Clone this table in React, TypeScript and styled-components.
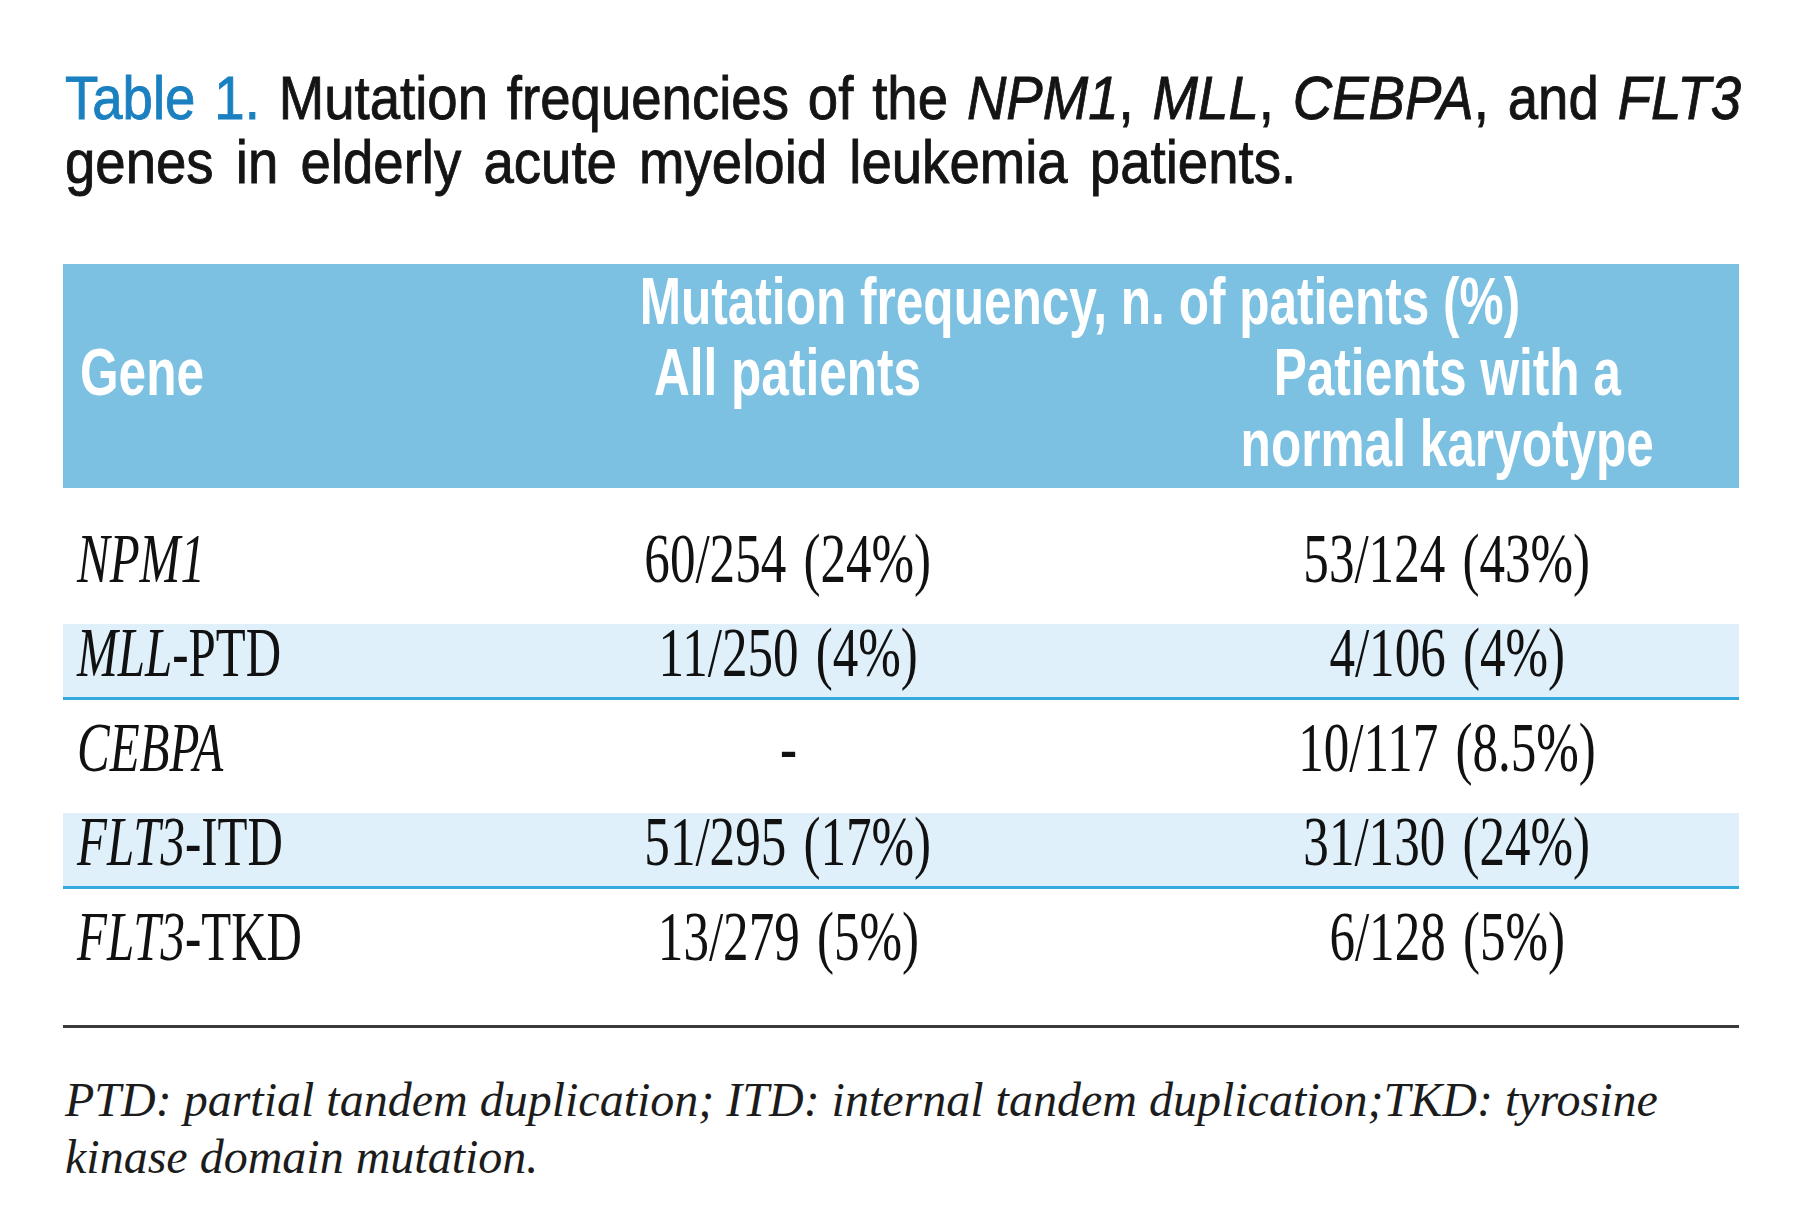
import styled, { createGlobalStyle } from "styled-components";

const GlobalStyle = createGlobalStyle`
  html, body {
    margin: 0;
    padding: 0;
    background: #ffffff;
  }
`;

const Page = styled.div`
  width: 1800px;
  height: 1221px;
  box-sizing: border-box;
  padding: 66px 61px 0 63px;
  overflow: hidden;
  background: #ffffff;
  color: #111111;
`;

const Caption = styled.div`
  font-family: "Liberation Sans", Arial, sans-serif;
  font-size: 62px;
  line-height: 64px;
  color: #141414;
  -webkit-text-stroke: 0.9px currentColor;
  margin-bottom: 70px;
`;

const CaptionLine = styled.div<{ $justify?: boolean; $wordGap?: number }>`
  width: calc(100% / 0.88);
  transform: scaleX(0.88);
  transform-origin: left center;
  white-space: nowrap;
  text-align: ${(p) => (p.$justify ? "justify" : "left")};
  text-align-last: ${(p) => (p.$justify ? "justify" : "left")};
  word-spacing: ${(p) => p.$wordGap || 0}px;
  margin-left: 2px;
`;

const Label = styled.span`
  color: #1a80c0;
`;

const Header = styled.div`
  display: grid;
  grid-template-columns: 358px 734px 1fr;
  background: #7cc1e1;
  padding: 1px 0 10px;
  font-family: "Liberation Sans", Arial, sans-serif;
  font-weight: 700;
  font-size: 67px;
  line-height: 71px;
  color: #ffffff;
`;

const HeadCell = styled.div<{ $align?: "left" | "center"; $span?: string }>`
  grid-column: ${(p) => p.$span || "auto"};
  text-align: ${(p) => p.$align || "center"};
  padding-left: ${(p) => (p.$align === "left" ? "17px" : "0")};
`;

const Squeeze = styled.span<{ $scale: number; $origin?: string }>`
  display: inline-block;
  transform: scaleX(${(p) => p.$scale});
  transform-origin: ${(p) => p.$origin || "center"} center;
  white-space: nowrap;
`;

const Body = styled.div`
  display: flex;
  flex-direction: column;
  gap: 18.5px;
  padding: 41.5px 0;
  border-bottom: 3px solid #3a3a3a;
`;

const Row = styled.div<{ $shaded?: boolean }>`
  display: grid;
  grid-template-columns: 358px 734px 1fr;
  height: 76px;
  box-sizing: border-box;
  padding-bottom: 18px;
  background: ${(p) => (p.$shaded ? "#dff0fa" : "transparent")};
  border-bottom: 3px solid ${(p) => (p.$shaded ? "#33a9de" : "transparent")};
  font-family: "Liberation Serif", "Times New Roman", serif;
  font-size: 69px;
  line-height: 58px;
  color: #111111;
`;

const GeneCell = styled.div`
  padding-left: 14px;
  white-space: nowrap;
`;

const ValueCell = styled.div`
  text-align: center;
  white-space: nowrap;
  word-spacing: 6px;
`;

const Footnote = styled.p`
  margin: 43px 0 0 2px;
  font-family: "Liberation Serif", "Times New Roman", serif;
  font-style: italic;
  font-size: 48px;
  line-height: 57px;
  color: #1c1c1c;
`;

type Gene = { name: string; suffix?: string; all: string; normal: string };

const rows: Gene[] = [
  { name: "NPM1", all: "60/254 (24%)", normal: "53/124 (43%)" },
  { name: "MLL", suffix: "-PTD", all: "11/250 (4%)", normal: "4/106 (4%)" },
  { name: "CEBPA", all: "-", normal: "10/117 (8.5%)" },
  { name: "FLT3", suffix: "-ITD", all: "51/295 (17%)", normal: "31/130 (24%)" },
  { name: "FLT3", suffix: "-TKD", all: "13/279 (5%)", normal: "6/128 (5%)" },
];

export default function App() {
  return (
    <>
      <GlobalStyle />
      <Page>
        <Caption>
          <CaptionLine $justify>
            <Label>Table 1.</Label> Mutation frequencies of the <i>NPM1</i>,{" "}
            <i>MLL</i>, <i>CEBPA</i>, and <i>FLT3</i>
          </CaptionLine>
          <CaptionLine $wordGap={8}>
            genes in elderly acute myeloid leukemia patients.
          </CaptionLine>
        </Caption>

        <Header>
          <HeadCell $span="2 / 4">
            <Squeeze $scale={0.74}>Mutation frequency, n. of patients (%)</Squeeze>
          </HeadCell>
          <HeadCell $align="left">
            <Squeeze $scale={0.74} $origin="left">
              Gene
            </Squeeze>
          </HeadCell>
          <HeadCell>
            <Squeeze $scale={0.74}>All patients</Squeeze>
          </HeadCell>
          <HeadCell>
            <Squeeze $scale={0.74}>
              Patients with a
              <br />
              normal karyotype
            </Squeeze>
          </HeadCell>
        </Header>

        <Body>
          {rows.map((r, i) => (
            <Row key={r.name + (r.suffix || "")} $shaded={i % 2 === 1}>
              <GeneCell>
                <Squeeze $scale={0.71} $origin="left">
                  <i>{r.name}</i>
                  {r.suffix}
                </Squeeze>
              </GeneCell>
              <ValueCell>
                <Squeeze $scale={0.74}>{r.all}</Squeeze>
              </ValueCell>
              <ValueCell>
                <Squeeze $scale={0.74}>{r.normal}</Squeeze>
              </ValueCell>
            </Row>
          ))}
        </Body>

        <Footnote>
          PTD: partial tandem duplication; ITD: internal tandem duplication;TKD: tyrosine
          <br />
          kinase domain mutation.
        </Footnote>
      </Page>
    </>
  );
}
